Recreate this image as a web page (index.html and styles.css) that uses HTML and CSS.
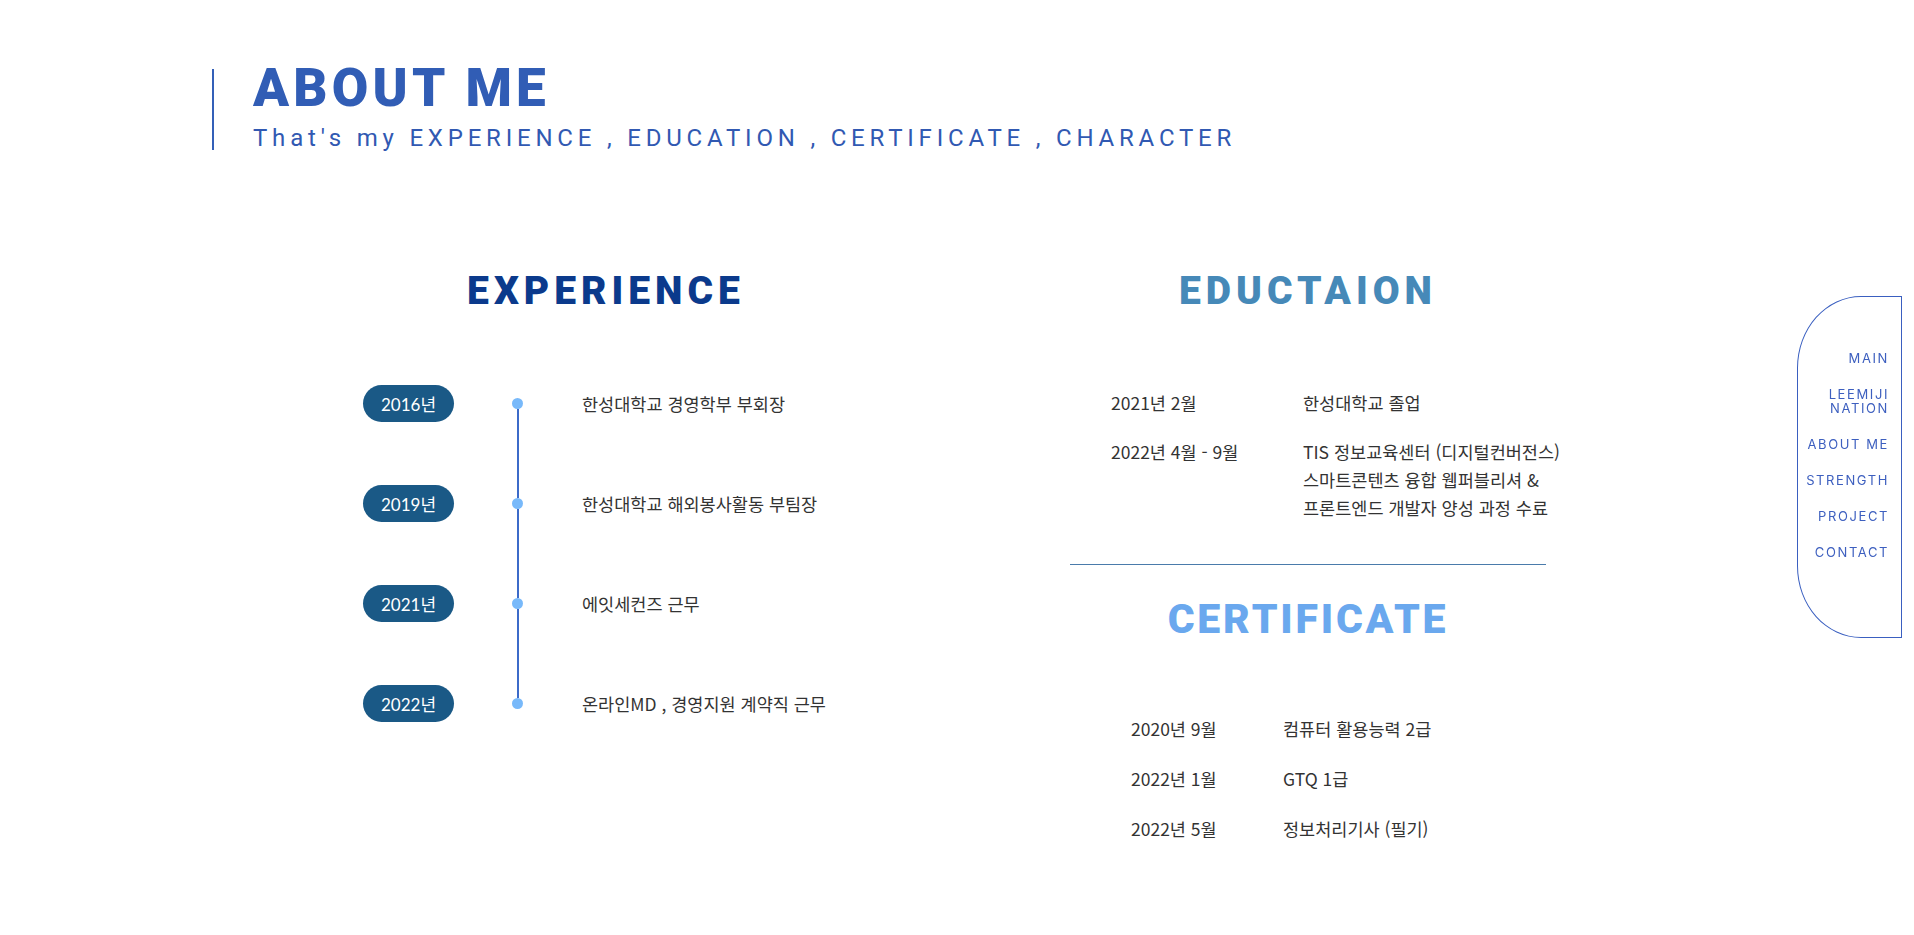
FILE: index.html
```html
<!DOCTYPE html>
<html lang="ko">
<head>
<meta charset="utf-8">
<title>About Me</title>
<link rel="stylesheet" href="styles.css">
</head>
<body>
<main class="page">
  <header class="header">
    <h1 class="title">ABOUT ME</h1>
    <p class="subtitle">That's my EXPERIENCE , EDUCATION , CERTIFICATE , CHARACTER</p>
  </header>

  <div class="columns">
    <section class="col-left">
      <h2 class="sec-title exp">EXPERIENCE</h2>
      <ul class="timeline">
        <li class="tl-row"><span class="pill">2016년</span><span class="dot"></span><span class="tl-text">한성대학교 경영학부 부회장</span></li>
        <li class="tl-row"><span class="pill">2019년</span><span class="dot"></span><span class="tl-text">한성대학교 해외봉사활동 부팀장</span></li>
        <li class="tl-row"><span class="pill">2021년</span><span class="dot"></span><span class="tl-text">에잇세컨즈 근무</span></li>
        <li class="tl-row"><span class="pill">2022년</span><span class="dot last"></span><span class="tl-text">온라인MD , 경영지원 계약직 근무</span></li>
      </ul>
    </section>

    <section class="col-right">
      <h2 class="sec-title edu">EDUCTAION</h2>
      <ul class="edu-list">
        <li class="edu-row"><span class="edu-date">2021년 2월</span><span class="edu-text">한성대학교 졸업</span></li>
        <li class="edu-row"><span class="edu-date">2022년 4월 - 9월</span><span class="edu-text">TIS 정보교육센터 (디지털컨버전스)<br>스마트콘텐츠 융합 웹퍼블리셔 &amp;<br>프론트엔드 개발자 양성 과정 수료</span></li>
      </ul>
      <hr class="divider">
      <h2 class="sec-title cert">CERTIFICATE</h2>
      <ul class="cert-list">
        <li class="cert-row"><span class="cert-date">2020년 9월</span><span class="cert-text">컴퓨터 활용능력 2급</span></li>
        <li class="cert-row"><span class="cert-date">2022년 1월</span><span class="cert-text">GTQ 1급</span></li>
        <li class="cert-row"><span class="cert-date">2022년 5월</span><span class="cert-text">정보처리기사 (필기)</span></li>
      </ul>
    </section>
  </div>
</main>

<nav class="side-nav">
  <a class="nav-item">MAIN</a>
  <a class="nav-item">LEEMIJI<br>NATION</a>
  <a class="nav-item">ABOUT ME</a>
  <a class="nav-item">STRENGTH</a>
  <a class="nav-item">PROJECT</a>
  <a class="nav-item">CONTACT</a>
</nav>
</body>
</html>
```

FILE: styles.css
```css
* { box-sizing: border-box; }
html, body { margin: 0; padding: 0; background: #fff; }
body {
  font-family: "Noto Sans CJK KR", "Noto Sans", sans-serif;
  color: #333;
  width: 1914px;
  height: 935px;
  overflow: hidden;
}
ul { list-style: none; margin: 0; padding: 0; }
h1, h2, p { margin: 0; }

.page { padding-top: 69px; }

.header {
  display: flex;
  flex-direction: column;
  align-items: flex-start;
  margin-left: 212px;
  border-left: 2px solid #3460b8;
  padding-left: 39px;
  height: 81px;
}
.title {
  font-family: "Roboto", sans-serif;
  font-weight: 900;
  font-size: 53px;
  line-height: 53px;
  letter-spacing: 4.2px;
  color: #315db5;
  margin-top: -7px;
}
.subtitle {
  font-family: "Roboto", sans-serif;
  font-weight: 400;
  font-size: 24px;
  line-height: 24px;
  letter-spacing: 4.8px;
  color: #3159b2;
  margin-top: 11px;
}

.columns {
  display: flex;
  margin-left: 363px;
  margin-top: 122px;
  gap: 221px;
}
.col-left { width: 486px; }
.col-right { width: 476px; }

.sec-title {
  font-family: "Roboto", sans-serif;
  font-weight: 900;
  font-size: 39px;
  line-height: 39px;
  letter-spacing: 5px;
  text-align: center;
}
.exp { color: #0b3a8c; }
.edu { color: #4689b8; }
.cert { color: #6aa8ee; font-size: 41px; line-height: 41px; letter-spacing: 2.8px; }

.timeline { margin-top: 42px; }
.tl-row {
  display: flex;
  align-items: center;
  height: 100px;
}
.pill {
  width: 91px;
  height: 37px;
  border-radius: 19px;
  background: #1a5986;
  color: #fff;
  font-family: "Lato", "Noto Sans CJK KR", sans-serif;
  font-size: 17px;
  display: flex;
  align-items: center;
  justify-content: center;
}
.dot {
  position: relative;
  width: 11px;
  height: 11px;
  border-radius: 50%;
  background: #78b9fa;
  margin-left: 58px;
  margin-right: 59px;
}
.dot::after {
  content: "";
  position: absolute;
  left: 4.5px;
  top: 11px;
  width: 2px;
  height: 89px;
  background: #3c6bc9;
}
.dot.last::after { display: none; }
.tl-text {
  font-size: 17.5px;
  color: #333;
  white-space: nowrap;
}

.edu-list {
  margin-top: 78px;
  display: flex;
  flex-direction: column;
  gap: 21px;
}
.edu-row {
  display: flex;
  font-size: 17.5px;
  line-height: 28px;
  color: #333;
}
.edu-date { width: 192px; margin-left: 41px; flex-shrink: 0; }
.edu-text, .cert-text { white-space: nowrap; }

.divider {
  border: 0;
  border-top: 1px solid #4a7bab;
  margin: 42px 0 34px;
  height: 0;
}

.cert-list {
  margin-top: 75px;
  display: flex;
  flex-direction: column;
  gap: 22px;
}
.cert-row {
  display: flex;
  font-size: 17.5px;
  line-height: 28px;
  color: #333;
}
.cert-date { width: 152px; margin-left: 61px; flex-shrink: 0; }

.side-nav {
  position: fixed;
  left: 1797px;
  top: 296px;
  width: 105px;
  height: 342px;
  border: 1px solid #3a5fc0;
  border-radius: 64px 0 0 64px / 72px 0 0 72px;
  display: flex;
  flex-direction: column;
  align-items: flex-end;
  gap: 22px;
  padding: 54px 12px 0 0;
}
.nav-item {
  font-family: "Inter", "Roboto", sans-serif;
  font-size: 13px;
  line-height: 14px;
  letter-spacing: 1.6px;
  color: #3d5fbf;
  text-align: right;
  text-decoration: none;
}
```
